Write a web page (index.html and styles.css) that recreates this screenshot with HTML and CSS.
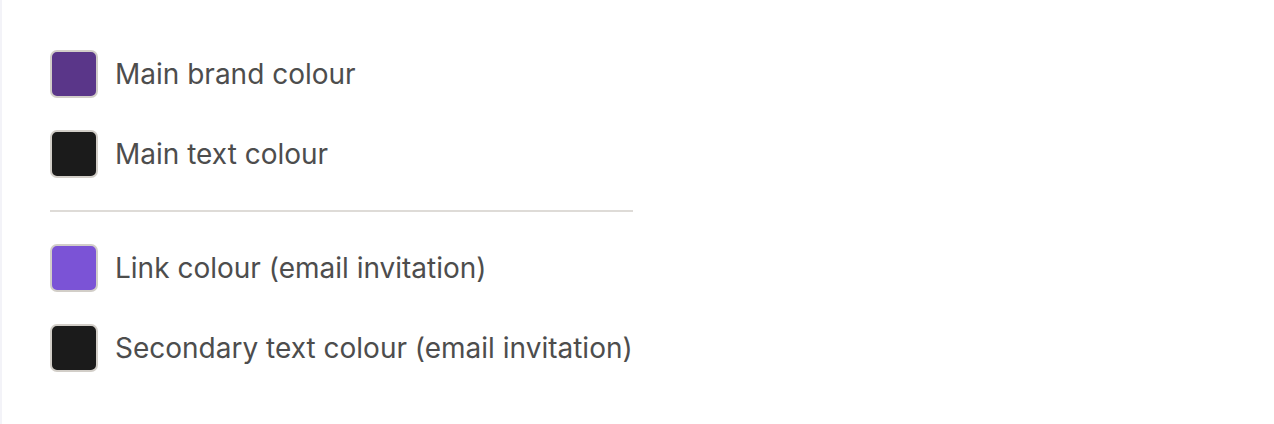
FILE: index.html
```html
<!DOCTYPE html>
<html lang="en">
<head>
<meta charset="utf-8">
<title>Colours</title>
<link rel="stylesheet" href="styles.css">
</head>
<body>
<div class="page">
  <div class="colours">
    <div class="group">
      <div class="row"><span class="swatch brand"></span><span class="label">Main brand colour</span></div>
      <div class="row"><span class="swatch ink"></span><span class="label">Main text colour</span></div>
    </div>
    <hr class="divider">
    <div class="group">
      <div class="row"><span class="swatch link"></span><span class="label">Link colour (email invitation)</span></div>
      <div class="row"><span class="swatch ink"></span><span class="label">Secondary text colour (email invitation)</span></div>
    </div>
  </div>
</div>
</body>
</html>
```
FILE: styles.css
```css
html, body {
  margin: 0;
  height: 100%;
  background: #ffffff;
}

.page {
  box-sizing: border-box;
  min-height: 100%;
  border-left: 2px solid #f3f3f8;
  padding: 50px 48px;
  font-family: Inter, "Noto Sans", sans-serif;
  color: #4d4d4d;
}

.colours {
  display: inline-flex;
  flex-direction: column;
}

.group {
  display: flex;
  flex-direction: column;
  gap: 32px;
}

.row {
  display: flex;
  align-items: center;
  gap: 17px;
  height: 48px;
}

.swatch {
  box-sizing: border-box;
  width: 48px;
  height: 48px;
  border: 2px solid #d2cec8;
  border-radius: 7px;
  flex: none;
}

.brand { background: #5a3689; }
.ink { background: #1b1b1b; }
.link { background: #7b53d6; }

.label {
  font-size: 28px;
  line-height: 36px;
  white-space: nowrap;
}

.divider {
  border: 0;
  height: 2px;
  margin: 32px 0 32px;
  background: #dedbd7;
}
```
